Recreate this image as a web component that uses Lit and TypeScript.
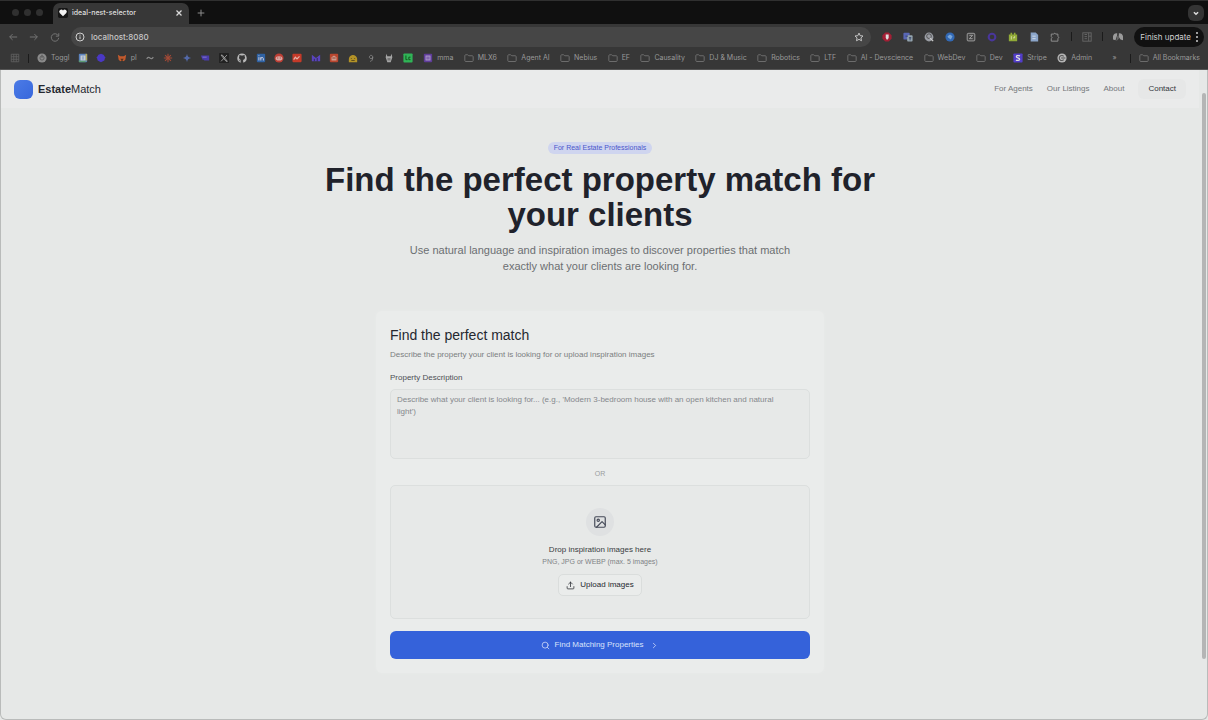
import { LitElement, html, css, svg, nothing } from "lit";
import { customElement } from "lit/decorators.js";

const folder = svg`<path d="M1 3.2c0-.7.4-1.1 1.100-1.100h2.300l1.200 1.200h4.300c.7 0 1.100.4 1.100 1.100v4.700c0 .7-.4 1.100-1.100 1.100H2.100C1.400 10.200 1 9.800 1 9.100z" fill="none" stroke="#777" stroke-width="1"/>`;

const glyphs: Record<string, unknown> = {
  folder,
  apps: svg`<g fill="none" stroke="#626262"><path d="M1.500 1.500h9v9h-9zM1.500 4.500h9M1.500 7.500h9M4.500 1.500v9M7.500 1.500v9"/></g>`,
  toggl: svg`<circle cx="6" cy="6" r="5.500" fill="#8b8b8b"/><circle cx="6" cy="6" r="2.500" fill="none" stroke="#555"/><path d="M6 2v4" stroke="#555"/>`,
  calendar: svg`<rect x="1" y="1" width="10" height="10" rx="1" fill="#5c83bd"/><path d="M9 1h2v8H9z" fill="#b3a554"/><path d="M1 9h8v2H1z" fill="#5b9b70"/><rect x="3" y="3" width="6" height="6" fill="#c5cbd3"/><path d="M6 4v4" stroke="#5c83bd"/>`,
  orb: svg`<path d="M6 1l3 1 2 3-1 4-4 2-4-2-1-4 2-3z" fill="#4a38c4"/>`,
  fox: svg`<path d="M1 2l3 2h4l3-2-1 6-2 2-2-1-2 1-2-2z" fill="#c25a2d"/><path d="M4 7l2 3 2-3z" fill="#54331f"/>`,
  wave: svg`<path d="M2 7q2-3 4-1t4-1" fill="none" stroke="#888" stroke-width="1.300"/>`,
  burst: svg`<path d="M6 1v10M1 6h10M2.500 2.500l7 7M9.500 2.500l-7 7" stroke="#a34a36" stroke-width="1.300"/>`,
  spark: svg`<path d="M6 1q.5 4.500 5 5-4.500.5-5 5-.5-4.500-5-5 4.500-.5 5-5" fill="#5369a8"/>`,
  screens: svg`<path d="M1 3h7v5H3zM5 3h6v6H5z" fill="#4a3cab"/><path d="M3 5h5" stroke="#8b80d5"/>`,
  x: svg`<rect x="0" y="0" width="12" height="12" rx="1" fill="#222"/><path d="M2.500 2.500l6 7.500h1.500L4 2.500zM9.500 2.500l-7 7.500" fill="none" stroke="#aaa"/>`,
  github: svg`<path fill="#b8b8b8" d="M6 .5a5.600 5.600 0 0 0-1.800 10.900c.3 0 .4-.1.4-.3v-1.200C3 10.200 2.700 9.200 2.700 9.200c-.3-.6-.6-.8-.6-.8-.5-.4 0-.4 0-.4.600 0 .9.600.9.600.5.900 1.300.6 1.600.5.100-.4.200-.6.4-.8C3.700 8.100 2.400 7.600 2.400 5.500c0-.6.2-1.100.6-1.500-.1-.2-.3-.8 0-1.500 0 0 .5-.2 1.600.6a5 5 0 0 1 2.800 0C8.500 2.300 9 2.500 9 2.500c.3.7.1 1.300 0 1.500.4.400.6.900.6 1.500 0 2.100-1.300 2.600-2.600 2.800.2.200.4.500.4 1v1.800c0 .2.100.4.400.3A5.600 5.600 0 0 0 6 .5z"/>`,
  linkedin: svg`<rect x="1" y="1" width="10" height="10" rx="1" fill="#2f62a3"/><path d="M3.500 5v4M3.500 2.800v1M5.800 9V5M5.800 6.800c0-2 3-2 3 0V9" fill="none" stroke="#ccd" stroke-width="1.200"/>`,
  reddit: svg`<circle cx="6" cy="6" r="5.500" fill="#bd3f35"/><ellipse cx="6" cy="6.500" rx="4" ry="2.500" fill="#d9aaa5"/><path d="M4 6h1M7 6h1" stroke="#a22" stroke-width="1.300"/>`,
  red: svg`<rect x=".5" y="1" width="11" height="10" rx="1" fill="#c43a29"/><path d="M2 8l2-3 2 2 3-3" stroke="#e2b1a9" stroke-width="1.500" fill="none"/>`,
  bars: svg`<path d="M1 2l5 4 5-4v8H1z" fill="#5a44bd"/><path d="M4 10V7M7.500 10V6" stroke="#292946"/>`,
  robot: svg`<rect x="1" y="1" width="10" height="10" rx="1" fill="#b9462f"/><path d="M3 9V5l3-2 3 2v4z" fill="#cf9c8e"/><path d="M4 6h4" stroke="#873624"/>`,
  smile: svg`<path d="M1 8a5 5 0 0 1 10-1v4H1z" fill="#b39227"/><path d="M4 6v1M8 6v1M4 9h4" stroke="#4d401a"/>`,
  nine: svg`<path d="M8 5.500a2 2 0 1 0-3 1h3V5q0 5-3 5" fill="none" stroke="#888"/>`,
  llama: svg`<path d="M3 1l1 3h4l1-3 1 4-2 6H4L2 5z" fill="#a5a5a5"/><path d="M5 6v3M7 6v3" stroke="#555"/>`,
  lc: svg`<rect x=".5" y=".5" width="11" height="11" rx="1" fill="#30b457"/><path d="M3.500 3v5h2M9 5H7v3h2" fill="none" stroke="#13591f" stroke-width="1.200"/>`,
  form: svg`<rect x="1" y="1" width="10" height="10" rx="1" fill="#5f3c99"/><rect x="3" y="3" width="6" height="6" fill="#ad9bcb"/><path d="M4 5h4M4 7h4" stroke="#5f3c99"/>`,
  stripe: svg`<rect x=".5" y=".5" width="11" height="11" rx="1" fill="#523dc9"/><path d="M8.500 3.500Q4 2.500 4 4.500c0 1.600 4 1.200 4 3 0 1.800-3 1.500-4.500 1" fill="none" stroke="#ddd" stroke-width="1.500"/>`,
  admin: svg`<circle cx="6" cy="6" r="5.500" fill="#b5b5b5"/><path d="M8 4a3 3 0 1 0 0 4M5 6h5" fill="none" stroke="#555" stroke-width="1.300"/>`,
  back: svg`<path d="M11 6H2M5.500 2.500L2 6l3.500 3.500" fill="none" stroke="#747474" stroke-width="1.200"/>`,
  forward: svg`<path d="M1 6h9M6.500 2.500L10 6 6.500 9.500" fill="none" stroke="#747474" stroke-width="1.200"/>`,
  reload: svg`<path d="M10 4.500A4.500 4.500 0 1 0 10.500 7M10.500 1.500v3.500H7" fill="none" stroke="#747474" stroke-width="1.200"/>`,
  info: svg`<circle cx="6" cy="6" r="4.800" fill="none" stroke="#d0d0d0" stroke-width="1.200"/><path d="M6 5.300v3.200M6 3.200v1.200" stroke="#d0d0d0" stroke-width="1.200"/>`,
  star: svg`<path d="M6 1.300l1.400 3.100 3.400.4-2.500 2.300.7 3.400L6 8.800l-3 1.700.7-3.400L1.200 4.800l3.400-.4z" fill="none" stroke="#c4c4c4" stroke-width="1.200"/>`,
  plus: svg`<path d="M6 2v8M2 6h8" stroke="#8b8b8b" stroke-width="1.200"/>`,
  close: svg`<path d="M3 3l6 6M9 3l-6 6" stroke="#dadada" stroke-width="1.500"/>`,
  chevdown: svg`<path d="M3.500 5L6 7.500 8.500 5" fill="none" stroke="#ddd" stroke-width="1.800"/>`,
  heart: svg`<rect width="12" height="12" rx="2" fill="#151515"/><path d="M6 10L2 6a2.400 2.400 0 0 1 4-3 2.400 2.400 0 0 1 4 3z" fill="#f2f2f2"/>`,
  stop: svg`<path d="M4 .5h4L11.500 4v4L8 11.500H4L.5 8V4z" fill="#a31f35"/><path d="M4.500 3v4l1 2h1.500l1-2V3z" fill="#ddd"/>`,
  translate: svg`<rect x=".5" y="1" width="7.500" height="8" rx="1" fill="#5967b5"/><rect x="5" y="4" width="6.500" height="7.500" rx="1" fill="#94a4ae"/><path d="M3 5h3M7 7h3M8.500 6v4" stroke="#333e66"/>`,
  lens: svg`<circle cx="6" cy="6" r="5.300" fill="#9a9da4"/><circle cx="6" cy="5" r="2.800" fill="none" stroke="#444"/><path d="M7 7l4 4" stroke="#ccc" stroke-width="1.500"/>`,
  blue: svg`<circle cx="6" cy="6" r="5.500" fill="#3269b5"/><path d="M3 5l3-2 3 2-2 4-3-2z" fill="#79a6d9"/>`,
  notion: svg`<rect x="1.500" y="1.500" width="9" height="9" rx="1.500" fill="#444" stroke="#888" stroke-width="1.500"/><path d="M4 4h4L4 8h4" stroke="#aaa" fill="none"/>`,
  ring: svg`<circle cx="6" cy="6" r="4" fill="none" stroke="#49369b" stroke-width="2.500"/>`,
  lime: svg`<path d="M1 3h2V1h2v2h2V1h2v2h2v8H1z" fill="#91aa37"/><path d="M4 5v4M6 7h2V5" stroke="#dce2b4" fill="none"/>`,
  doc: svg`<path d="M2 .5h6l3 3v8H2z" fill="#8ba5c9"/><path d="M4 5h4M4 8h4" stroke="#dce4ed"/>`,
  puzzle: svg`<path d="M1.500 2.500h3q1.200-2.500 2.500 0h2.500v3q2.500 1.200 0 2.500v3h-8V8q2-1 0-2.500z" fill="none" stroke="#8d8d8d" stroke-width="1.200"/>`,
  panel: svg`<rect x="1" y="1" width="10" height="10" fill="none" stroke="#6c6c6c"/><path d="M3 3h3M3 5.500h3M3 8h3M8 1v10M8 5h3" stroke="#6c6c6c"/>`,
  profile: svg`<path d="M0 9V5q1-4 5-3.500V4L3 10zM7 1.500Q11 1 12 5v5L9 9 7 6z" fill="#9a9a9a"/><path d="M5 5l2-1v4L4 11z" fill="#666"/>`,
};

const icon = (name: string) =>
  html`<svg class="ico" viewBox="0 0 12 12" aria-hidden="true">${glyphs[name]}</svg>`;

const bookmarks: Array<[string, string?]> = [
  ["toggl", "Toggl"], ["calendar"], ["orb"], ["fox", "pl"], ["wave"], ["burst"],
  ["spark"], ["screens"], ["x"], ["github"], ["linkedin"], ["reddit"], ["red"],
  ["bars"], ["robot"], ["smile"], ["nine"], ["llama"], ["lc"], ["form", "mma"],
  ["folder", "MLX6"], ["folder", "Agent AI"], ["folder", "Nebius"], ["folder", "EF"],
  ["folder", "Causality"], ["folder", "DJ & Music"], ["folder", "Robotics"],
  ["folder", "LTF"], ["folder", "AI - Devscience"], ["folder", "WebDev"],
  ["folder", "Dev"], ["stripe", "Stripe"], ["admin", "Admin"],
];

const extensions = ["stop", "translate", "lens", "blue", "notion", "ring", "lime", "doc", "puzzle"];

@customElement("browser-chrome")
export class BrowserChrome extends LitElement {
  static styles = css`
    :host { display: block; font-family: Inter, Roboto, sans-serif; font-size: 7px; color: #999; background: #373737; }
    * { box-sizing: border-box; }
    button, input { font: inherit; color: inherit; background: none; border: 0; padding: 0; margin: 0; }
    a { color: inherit; text-decoration: none; }
    .ico { display: block; width: 10px; height: 10px; flex: none; }
    .tabs { height: 24px; padding: 0 4px 0 12px; display: flex; align-items: center; background: #101010; border-top: 1px solid #303030; }
    .lights { display: flex; gap: 5px; margin-right: 10px; }
    .light { width: 7px; height: 7px; border-radius: 50%; background: #303030; }
    .tab { align-self: flex-end; width: 136px; height: 21px; padding: 0 5px 2px; display: flex; align-items: center; gap: 4px; border-radius: 7px 7px 0 0; background: #373737; color: #dedede; font-weight: 500; }
    .tab-name { flex: 1; }
    .new-tab { margin-left: 7px; }
    .tab-search { margin-left: auto; padding: 3px; border-radius: 6px; background: #343434; }
    .toolbar { height: 25px; padding: 0 4px 0 8px; display: flex; align-items: center; gap: 11px; }
    .nav { display: flex; gap: 11px; }
    .address { flex: 1; height: 20px; padding: 0 7px 0 4px; display: flex; align-items: center; gap: 6px; border-radius: 10px; background: #464646; }
    .url { flex: 1; min-width: 0; outline: 0; font-size: 8px; font-weight: 500; color: #c6c6c6; }
    .extensions { display: flex; align-items: center; gap: 11px; }
    .rule { width: 1px; height: 9px; background: #1b1b1b; }
    .tools { display: flex; align-items: center; gap: 10px; }
    .update { height: 20px; padding: 0 6px; display: flex; align-items: center; gap: 5px; border-radius: 10px; background: #111; color: #cfcfcf; font-size: 8px; }
    .dots { display: grid; gap: 2px; }
    .dot { width: 2px; height: 2px; background: #ccc; border-radius: 50%; }
    .bookmarks { height: 21px; padding: 0 8px 2px 10px; display: flex; align-items: center; gap: 8px; white-space: nowrap; border-bottom: 1px solid #555; }
    .list { flex: 1; display: flex; align-items: center; justify-content: space-between; }
    .mark { display: flex; align-items: center; gap: 4px; }
    .mark + .labelled { margin-left: 2px; }
    .more { margin: 0 5px 0 12px; }
  `;

  private mark([name, label]: [string, string?]) {
    return html`<a class=${label ? "mark labelled" : "mark"} href="#" aria-label=${label ?? name}>${icon(name)}${label ? html`<span>${label}</span>` : nothing}</a>`;
  }

  render() {
    return html`
      <div class="tabs">
        <div class="lights"><i class="light"></i><i class="light"></i><i class="light"></i></div>
        <div class="tab">
          ${icon("heart")}<span class="tab-name">ideal-nest-selector</span>
          <button aria-label="Close tab">${icon("close")}</button>
        </div>
        <button class="new-tab" aria-label="New tab">${icon("plus")}</button>
        <button class="tab-search" aria-label="Search tabs">${icon("chevdown")}</button>
      </div>
      <div class="toolbar">
        <div class="nav">
          <button aria-label="Back">${icon("back")}</button>
          <button aria-label="Forward">${icon("forward")}</button>
          <button aria-label="Reload">${icon("reload")}</button>
        </div>
        <div class="address">
          ${icon("info")}
          <input class="url" aria-label="Address" value="localhost:8080" />
          <button aria-label="Bookmark this page">${icon("star")}</button>
        </div>
        <div class="extensions">
          ${extensions.map((name) => html`<button aria-label=${name}>${icon(name)}</button>`)}
        </div>
        <div class="tools">
          <i class="rule"></i>
          <button aria-label="Side panel">${icon("panel")}</button>
          <i class="rule"></i>
          <button aria-label="Profile">${icon("profile")}</button>
        </div>
        <button class="update">Finish update<span class="dots"><i class="dot"></i><i class="dot"></i><i class="dot"></i></span></button>
      </div>
      <div class="bookmarks">
        ${icon("apps")}<i class="rule"></i>
        <div class="list">${bookmarks.map((b) => this.mark(b))}</div>
        <span class="more">»</span><i class="rule"></i>
        <div>${this.mark(["folder", "All Bookmarks"])}</div>
      </div>
    `;
  }
}

const line = (cls: string, body: unknown) =>
  html`<svg class=${cls} viewBox="0 0 24 24" fill="none" stroke="currentColor" stroke-width="2" stroke-linecap="round" stroke-linejoin="round" aria-hidden="true">${body}</svg>`;

@customElement("app-root")
export class AppRoot extends LitElement {
  static styles = css`
    :host { display: flex; flex-direction: column; min-height: 100vh; font-family: "Liberation Sans", Arial, sans-serif; font-size: 8px; line-height: 12px; color: #25282f; background: #e6e8e7; }
    * { box-sizing: border-box; }
    button, textarea { font: inherit; color: inherit; margin: 0; }
    a { color: inherit; text-decoration: none; }
    .page { flex: 1; display: flex; border: 1px solid #b9bbba; border-top: 0; border-radius: 0 0 6px 6px; }
    .content { flex: 1; min-width: 0; }
    .scroll { width: 8px; padding: 23px 1px 60px 3px; display: flex; }
    .thumb { flex: 1; border-radius: 2px; background: #b4b5b5; }
    .header { height: 38px; padding: 0 13px; display: flex; align-items: center; justify-content: space-between; background: #eaebeb; }
    .brand { display: flex; align-items: center; gap: 5px; font-size: 11px; }
    .logo { width: 19px; height: 19px; border-radius: 6px; background: linear-gradient(135deg, #4c7be6, #3767dc); }
    .links { display: flex; align-items: center; gap: 14px; color: #74777a; }
    .contact { padding: 4px 10px; border-radius: 6px; background: #e6e7e7; color: #33363b; }
    .hero { padding: 34px 16px 0; display: flex; flex-direction: column; align-items: center; text-align: center; }
    .badge { padding: 0 6px; border-radius: 6px; background: #cfd5ef; color: #4b57cb; font-size: 7px; line-height: 12px; }
    .headline { max-width: 600px; margin: 8px 0 0; font-size: 33px; line-height: 35px; font-weight: 700; color: #20222b; }
    .lead { max-width: 392px; margin: 10px 0 0; font-size: 11px; line-height: 16px; color: #6c6f72; }
    .card { width: 448px; max-width: 100%; margin: 37px auto 46px; padding: 14px; display: flex; flex-direction: column; border-radius: 6px; background: #eaeceb; box-shadow: 0 0 3px #e9ebea; }
    .title { margin: 0; font-size: 14px; line-height: 20px; font-weight: 400; }
    .note { margin: 4px 0 0; color: #7b7e80; }
    .label { margin-top: 11px; color: #4c4f54; }
    .description { display: block; height: 70px; margin-top: 5px; padding: 4px 24px 4px 6px; resize: none; border: 1px solid #dcdfde; border-radius: 5px; background: #e7e9e8; outline: 0; }
    .description::placeholder { color: #85888c; opacity: 1; }
    .or { margin: 9px 0 5px; text-align: center; font-size: 7px; color: #9a9d9e; }
    .drop { padding: 22px 12px; display: flex; flex-direction: column; align-items: center; border: 1px solid #dcdfde; border-radius: 5px; background: #e7e9e8; }
    .picture { width: 28px; height: 28px; display: grid; place-items: center; border-radius: 50%; background: #dfe1e2; color: #454a58; }
    .glyph { display: block; width: 14px; height: 14px; }
    .small { display: block; width: 9px; height: 9px; }
    .drop-title { margin: 8px 0 0; color: #393c41; }
    .formats { margin: 0 0 6px; font-size: 7px; color: #808386; }
    .upload { height: 22px; padding: 0 7px; display: flex; align-items: center; gap: 5px; border: 1px solid #dadddc; border-radius: 5px; background: #eaeceb; }
    .submit { height: 28px; margin-top: 12px; padding: 0 12px; display: flex; align-items: center; justify-content: center; gap: 5px; border: 0; border-radius: 6px; background: #3562da; color: #d9e2fa; }
    .submit-text { margin-right: 2px; }
  `;

  render() {
    return html`
      <browser-chrome></browser-chrome>
      <div class="page">
        <div class="content">
          <header class="header">
            <a class="brand" href="#"><i class="logo"></i><span><b>Estate</b>Match</span></a>
            <nav class="links">
              <a href="#">For Agents</a><a href="#">Our Listings</a><a href="#">About</a>
              <a class="contact" href="#">Contact</a>
            </nav>
          </header>
          <main>
            <section class="hero">
              <span class="badge">For Real Estate Professionals</span>
              <h1 class="headline">Find the perfect property match for your clients</h1>
              <p class="lead">Use natural language and inspiration images to discover properties that match exactly what your clients are looking for.</p>
            </section>
            <form class="card" @submit=${(e: Event) => e.preventDefault()}>
              <h2 class="title">Find the perfect match</h2>
              <p class="note">Describe the property your client is looking for or upload inspiration images</p>
              <label class="label" for="description">Property Description</label>
              <textarea class="description" id="description" placeholder="Describe what your client is looking for... (e.g., 'Modern 3-bedroom house with an open kitchen and natural light')"></textarea>
              <div class="or">OR</div>
              <div class="drop">
                <span class="picture">${line("glyph", svg`<rect x="3" y="3" width="18" height="18" rx="2"/><circle cx="9" cy="9" r="2"/><path d="M6 21l9.500-9.500L21 17"/>`)}</span>
                <p class="drop-title">Drop inspiration images here</p>
                <p class="formats">PNG, JPG or WEBP (max. 5 images)</p>
                <button class="upload" type="button">${line("small", svg`<path d="M3 15v4a2 2 0 0 0 2 2h14a2 2 0 0 0 2-2v-4M17 8l-5-5-5 5M12 3v12"/>`)}Upload images</button>
              </div>
              <button class="submit" type="submit">
                ${line("small", svg`<circle cx="11" cy="11" r="8"/><path d="M21 21l-4-4"/>`)}
                <span class="submit-text">Find Matching Properties</span>
                ${line("small", svg`<path d="M9 18l6-6-6-6"/>`)}
              </button>
            </form>
          </main>
        </div>
        <div class="scroll"><i class="thumb"></i></div>
      </div>
    `;
  }
}
